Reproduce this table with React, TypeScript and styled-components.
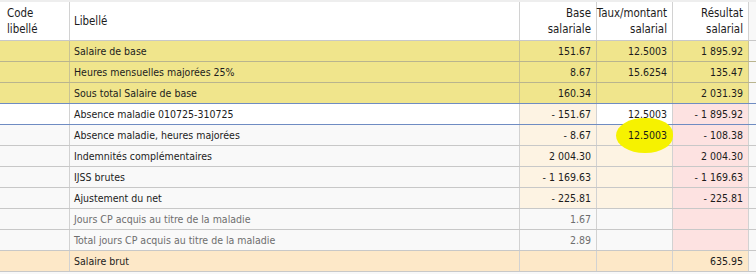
import styled, { createGlobalStyle } from "styled-components";

const GlobalStyle = createGlobalStyle`
  body {
    margin: 0;
    background: #f8f8f8;
    font-family: "DejaVu Sans Condensed", "DejaVu Sans", sans-serif;
    font-size: 10.5px;
    color: #1c1c1c;
  }
`;

type RowTone = "plain" | "yellow" | "selected" | "brut";
type CellTone = "none" | "peach" | "pink";

interface Line {
  label: string;
  base?: string;
  taux?: string;
  res?: string;
  tone: RowTone;
  baseTone?: CellTone;
  tauxTone?: CellTone;
  resTone?: CellTone;
  muted?: boolean;
  marked?: boolean;
  bottom?: "grey" | "blue";
}

const lines: Line[] = [
  { label: "Salaire de base", base: "151.67", taux: "12.5003", res: "1 895.92", tone: "yellow" },
  { label: "Heures mensuelles majorées 25%", base: "8.67", taux: "15.6254", res: "135.47", tone: "yellow" },
  { label: "Sous total Salaire de base", base: "160.34", res: "2 031.39", tone: "yellow", bottom: "blue" },
  {
    label: "Absence maladie 010725-310725",
    base: "- 151.67",
    taux: "12.5003",
    res: "- 1 895.92",
    tone: "selected",
    baseTone: "peach",
    resTone: "pink",
    bottom: "blue",
  },
  {
    label: "Absence maladie, heures majorées",
    base: "- 8.67",
    taux: "12.5003",
    res: "- 108.38",
    tone: "plain",
    baseTone: "peach",
    tauxTone: "peach",
    resTone: "pink",
    marked: true,
  },
  { label: "Indemnités complémentaires", base: "2 004.30", res: "2 004.30", tone: "plain", baseTone: "peach", tauxTone: "peach", resTone: "pink" },
  { label: "IJSS brutes", base: "- 1 169.63", res: "- 1 169.63", tone: "plain", baseTone: "peach", tauxTone: "peach", resTone: "pink" },
  { label: "Ajustement du net", base: "- 225.81", res: "- 225.81", tone: "plain", baseTone: "peach", tauxTone: "peach", resTone: "pink" },
  { label: "Jours CP acquis au titre de la maladie", base: "1.67", tone: "plain", resTone: "pink", muted: true },
  { label: "Total jours CP acquis au titre de la maladie", base: "2.89", tone: "plain", resTone: "pink", muted: true },
  { label: "Salaire brut", res: "635.95", tone: "brut" },
];

const rowBg: Record<RowTone, string> = {
  plain: "#f9f9f9",
  yellow: "#f0e58c",
  selected: "#ffffff",
  brut: "#fde8c8",
};

const cellBg: Record<Exclude<CellTone, "none">, string> = {
  peach: "#fdf3e3",
  pink: "#fde2e1",
};

const COLS = "70px 450px 77px 76px 76px 1fr";

const Page = styled.div`
  border-top: 2px solid #eeeeee;
  height: 272px;
  overflow: hidden;
`;

const Head = styled.div`
  display: grid;
  grid-template-columns: ${COLS};
  height: 38px;
  border-bottom: 1px solid #c8c8c8;
`;

const HeadCell = styled.div<{ $right?: boolean; $blank?: boolean }>`
  display: flex;
  flex-direction: column;
  justify-content: center;
  align-items: ${(p) => (p.$right ? "flex-end" : "flex-start")};
  padding: 0 5px 0 ${(p) => (p.$right ? "0" : "4px")};
  line-height: 16px;
  font-size: 11.4px;
  white-space: nowrap;
  background: ${(p) => (p.$blank ? "#f8f8f8" : "#ffffff")};
  border-right: 1px solid #d2d2d2;

  &:first-child {
    padding-left: 7px;
  }

  &:last-child {
    border-right: none;
  }
`;

const Row = styled.div<{ $bottom: string }>`
  display: grid;
  grid-template-columns: ${COLS};
  height: 20px;
  border-bottom: 1px solid ${(p) => p.$bottom};
`;

const Cell = styled.div<{ $bg: string; $num?: boolean; $muted?: boolean; $line: string }>`
  position: relative;
  background: ${(p) => p.$bg};
  border-right: 1px solid ${(p) => p.$line};
  line-height: 20px;
  padding: ${(p) => (p.$num ? "0 5px 0 0" : "0 0 0 4px")};
  text-align: ${(p) => (p.$num ? "right" : "left")};
  color: ${(p) => (p.$muted ? "#6e6e6e" : "#1c1c1c")};
  white-space: nowrap;

  &:last-child {
    border-right: none;
  }
`;

const Value = styled.span`
  position: relative;
  z-index: 3;
`;

// hand-drawn highlighter blob over the taux cell
const Marker = styled.span`
  position: absolute;
  z-index: 2;
  left: 19px;
  top: -7px;
  width: 57px;
  height: 35px;
  border-radius: 50% 45% 48% 50%;
  background: #f6f200;
  filter: blur(0.7px);
`;

const Extra = styled.div`
  background: #f8f8f8;
`;

export default function App() {
  return (
    <>
      <GlobalStyle />
      <Page>
        <Head>
          <HeadCell>
            <span>Code</span>
            <span>libellé</span>
          </HeadCell>
          <HeadCell>Libellé</HeadCell>
          <HeadCell $right>
            <span>Base</span>
            <span>salariale</span>
          </HeadCell>
          <HeadCell $right>
            <span>Taux/montant</span>
            <span>salarial</span>
          </HeadCell>
          <HeadCell $right>
            <span>Résultat</span>
            <span>salarial</span>
          </HeadCell>
          <HeadCell $blank />
        </Head>
        {lines.map((l) => {
          const bg = rowBg[l.tone];
          const pick = (t?: CellTone) => (t && t !== "none" ? cellBg[t] : bg);
          const vline = l.tone === "yellow" ? "#c9c394" : "#d2d2d2";
          const bottom =
            l.bottom === "blue" ? "#6f8cc2" : l.tone === "yellow" ? "#b9b48e" : "#c8c8c8";
          return (
            <Row key={l.label} $bottom={bottom}>
              <Cell $bg={bg} $line={vline} />
              <Cell $bg={bg} $line={vline} $muted={l.muted}>
                {l.label}
              </Cell>
              <Cell $bg={pick(l.baseTone)} $line={vline} $num $muted={l.muted}>
                {l.base}
              </Cell>
              <Cell $bg={pick(l.tauxTone)} $line={vline} $num>
                {l.marked && <Marker />}
                <Value>{l.taux}</Value>
              </Cell>
              <Cell $bg={pick(l.resTone)} $line={vline} $num>
                {l.res}
              </Cell>
              <Extra />
            </Row>
          );
        })}
      </Page>
    </>
  );
}
